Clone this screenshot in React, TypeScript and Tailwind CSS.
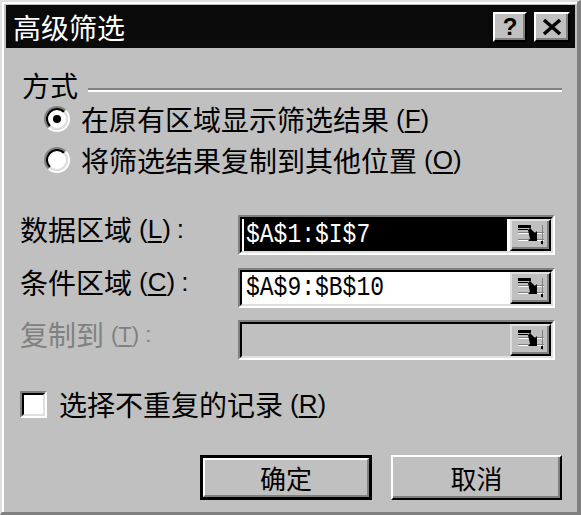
import React from "react";

const cjk = { fontFamily: '"Noto Sans CJK SC", "Noto Sans", sans-serif' };
const latin = { fontFamily: '"Liberation Sans", Arial, sans-serif' };
const mono = { fontFamily: '"Liberation Mono", "DejaVu Sans Mono", monospace' };

function Acc({ ch, colon = false }: { ch: string; colon?: boolean }) {
  return (
    <span className="ml-[7px] text-[26px]" style={latin}>
      (<span className="underline underline-offset-[3px] decoration-[2px]">{ch}</span>){colon ? <span className="ml-[6px]">:</span> : null}
    </span>
  );
}

function Radio({ checked }: { checked?: boolean }) {
  return (
    <div className="w-[26px] h-[26px] rounded-full border-2 border-t-[#808080] border-l-[#808080] border-r-white border-b-white shrink-0">
      <div className="w-full h-full rounded-full border-2 border-t-black border-l-black border-r-[#dfdfdf] border-b-[#dfdfdf] bg-white flex items-center justify-center">
        {checked ? <div className="w-[8px] h-[8px] rounded-full bg-black" /> : null}
      </div>
    </div>
  );
}

function PickerIcon() {
  return (
    <svg width="30" height="24" viewBox="0 0 30 24">
      <rect x="2" y="9" width="26" height="1" fill="#808080" />
      <rect x="2" y="10" width="26" height="1" fill="#ffffff" />
      <rect x="2" y="16" width="26" height="1" fill="#808080" />
      <rect x="2" y="17" width="26" height="1" fill="#ffffff" />
      <rect x="26" y="2" width="1" height="20" fill="#808080" />
      <rect x="2" y="2" width="13" height="3" fill="#000" />
      <rect x="2" y="6" width="10" height="1" fill="#000" />
      <path d="M12 7 L14 5 L19 10 L21 8 L21 18 L12 18 L14 16 Z" fill="#000" />
      <rect x="25" y="18" width="2" height="3" fill="#000" />
    </svg>
  );
}

function Picker() {
  return (
    <div className="w-[41px] shrink-0 border-2 border-t-[#dfdfdf] border-l-[#dfdfdf] border-r-black border-b-black bg-[#c0c0c0] shadow-[inset_-2px_-2px_0_#808080] flex items-center justify-center">
      <PickerIcon />
    </div>
  );
}

function Field({ children, bg }: { children?: React.ReactNode; bg: string }) {
  return (
    <div className="w-[317px] h-[40px] border-2 border-t-[#808080] border-l-[#808080] border-r-white border-b-white">
      <div className={`w-full h-full border-2 border-t-black border-l-black border-r-[#dfdfdf] border-b-[#dfdfdf] flex ${bg}`}>
        <div className="flex-1 flex">{children}</div>
        <Picker />
      </div>
    </div>
  );
}

export default function App() {
  return (
    <div
      className="w-[581px] h-[515px] bg-[#c0c0c0] border-t-2 border-l-2 border-t-[#dfdfdf] border-l-[#dfdfdf] border-r-4 border-r-[#808080] border-b-[3px] border-b-[#808080] flex flex-col text-black"
      style={cjk}
    >
      <div className="flex-1 border-t-2 border-l-2 border-white pt-[1px] pl-[2px] pr-[2px] flex flex-col">
        {/* Title bar */}
        <div className="h-[43px] bg-[#0a0a0a] flex items-center pl-[7px] pr-[5px] shrink-0">
          <span className="text-white text-[28px] leading-none">高级筛选</span>
          <div className="ml-auto flex gap-[7px]">
            <div className="w-[34px] h-[30px] border-2 border-t-white border-l-white border-r-black border-b-black bg-[#c0c0c0] shadow-[inset_-2px_-2px_0_#808080] flex items-center justify-center">
              <span className="text-[24px] font-bold leading-none" style={latin}>?</span>
            </div>
            <div className="w-[36px] h-[30px] border-2 border-t-white border-l-white border-r-black border-b-black bg-[#c0c0c0] shadow-[inset_-2px_-2px_0_#808080] flex items-center justify-center">
              <svg width="20" height="16" viewBox="0 0 20 16">
                <path d="M2 1 L18 15 M18 1 L2 15" stroke="#000" strokeWidth="3.5" />
              </svg>
            </div>
          </div>
        </div>

        {/* Body */}
        <div className="flex flex-col pl-[14px]">
          {/* Group heading */}
          <div className="mt-[23px] h-[28px] flex items-start pl-[2px]">
            <span className="text-[28px] leading-[28px]">方式</span>
            <div className="flex-1 ml-[10px] mr-[13px] mt-[17px] h-[4px] border-t-2 border-t-[#808080] border-b-2 border-b-white" />
          </div>

          <div className="mt-[6px] h-[28px] flex items-center pl-[24px]">
            <Radio checked />
            <span className="ml-[11px] text-[28px] leading-[28px]">在原有区域显示筛选结果</span>
            <Acc ch="F" />
          </div>
          <div className="mt-[13px] h-[28px] flex items-center pl-[24px]">
            <Radio />
            <span className="ml-[11px] text-[28px] leading-[28px]">将筛选结果复制到其他位置</span>
            <Acc ch="O" />
          </div>

          {/* Fields */}
          <div className="mt-[41px] flex items-start">
            <div className="w-[218px] h-[28px] flex items-center">
              <span className="text-[28px] leading-[28px]">数据区域</span>
              <Acc ch="L" colon />
            </div>
            <Field bg="bg-white">
              <div className="flex-1 flex pl-[2px] pr-[3px]">
                <div className="flex-1 bg-black text-white flex items-center pl-[2px]">
                  <span className="inline-block text-[23px] leading-none scale-y-[1.2]" style={mono}>$A$1:$I$7</span>
                </div>
              </div>
            </Field>
          </div>

          <div className="mt-[13px] flex items-start">
            <div className="w-[218px] h-[28px] flex items-center">
              <span className="text-[28px] leading-[28px]">条件区域</span>
              <Acc ch="C" colon />
            </div>
            <Field bg="bg-white">
              <div className="flex-1 flex items-center pl-[4px]">
                <span className="inline-block text-[23px] leading-none scale-y-[1.2]" style={mono}>$A$9:$B$10</span>
              </div>
            </Field>
          </div>

          <div className="mt-[12px] flex items-start">
            <div className="w-[218px] h-[28px] flex items-center text-[#808080]">
              <span className="text-[28px] leading-[28px]">复制到</span>
              <span className="ml-[7px] text-[22px]" style={latin}>
                (<span className="underline underline-offset-[3px]">T</span>)<span className="ml-[6px]">:</span>
              </span>
            </div>
            <Field bg="bg-[#c0c0c0]" />
          </div>

          {/* Checkbox */}
          <div className="mt-[30px] h-[28px] flex items-center">
            <div className="w-[27px] h-[27px] border-2 border-t-[#808080] border-l-[#808080] border-r-white border-b-white shrink-0">
              <div className="w-full h-full border-2 border-t-black border-l-black border-r-[#dfdfdf] border-b-[#dfdfdf] bg-white" />
            </div>
            <span className="ml-[12px] text-[28px] leading-[28px]">选择不重复的记录</span>
            <Acc ch="R" />
          </div>

          {/* Buttons */}
          <div className="mt-[37px] flex justify-end gap-[19px] mr-[13px]">
            <div className="w-[172px] h-[45px] border-[3px] border-black">
              <div className="w-full h-full border-2 border-t-white border-l-white border-r-[#808080] border-b-[#808080] flex items-center justify-center">
                <span className="text-[26px] leading-none">确定</span>
              </div>
            </div>
            <div className="w-[171px] h-[45px] border-2 border-t-white border-l-white border-r-black border-b-black shadow-[inset_-2px_-2px_0_#808080] flex items-center justify-center">
              <span className="text-[26px] leading-none">取消</span>
            </div>
          </div>
        </div>
      </div>
    </div>
  );
}
